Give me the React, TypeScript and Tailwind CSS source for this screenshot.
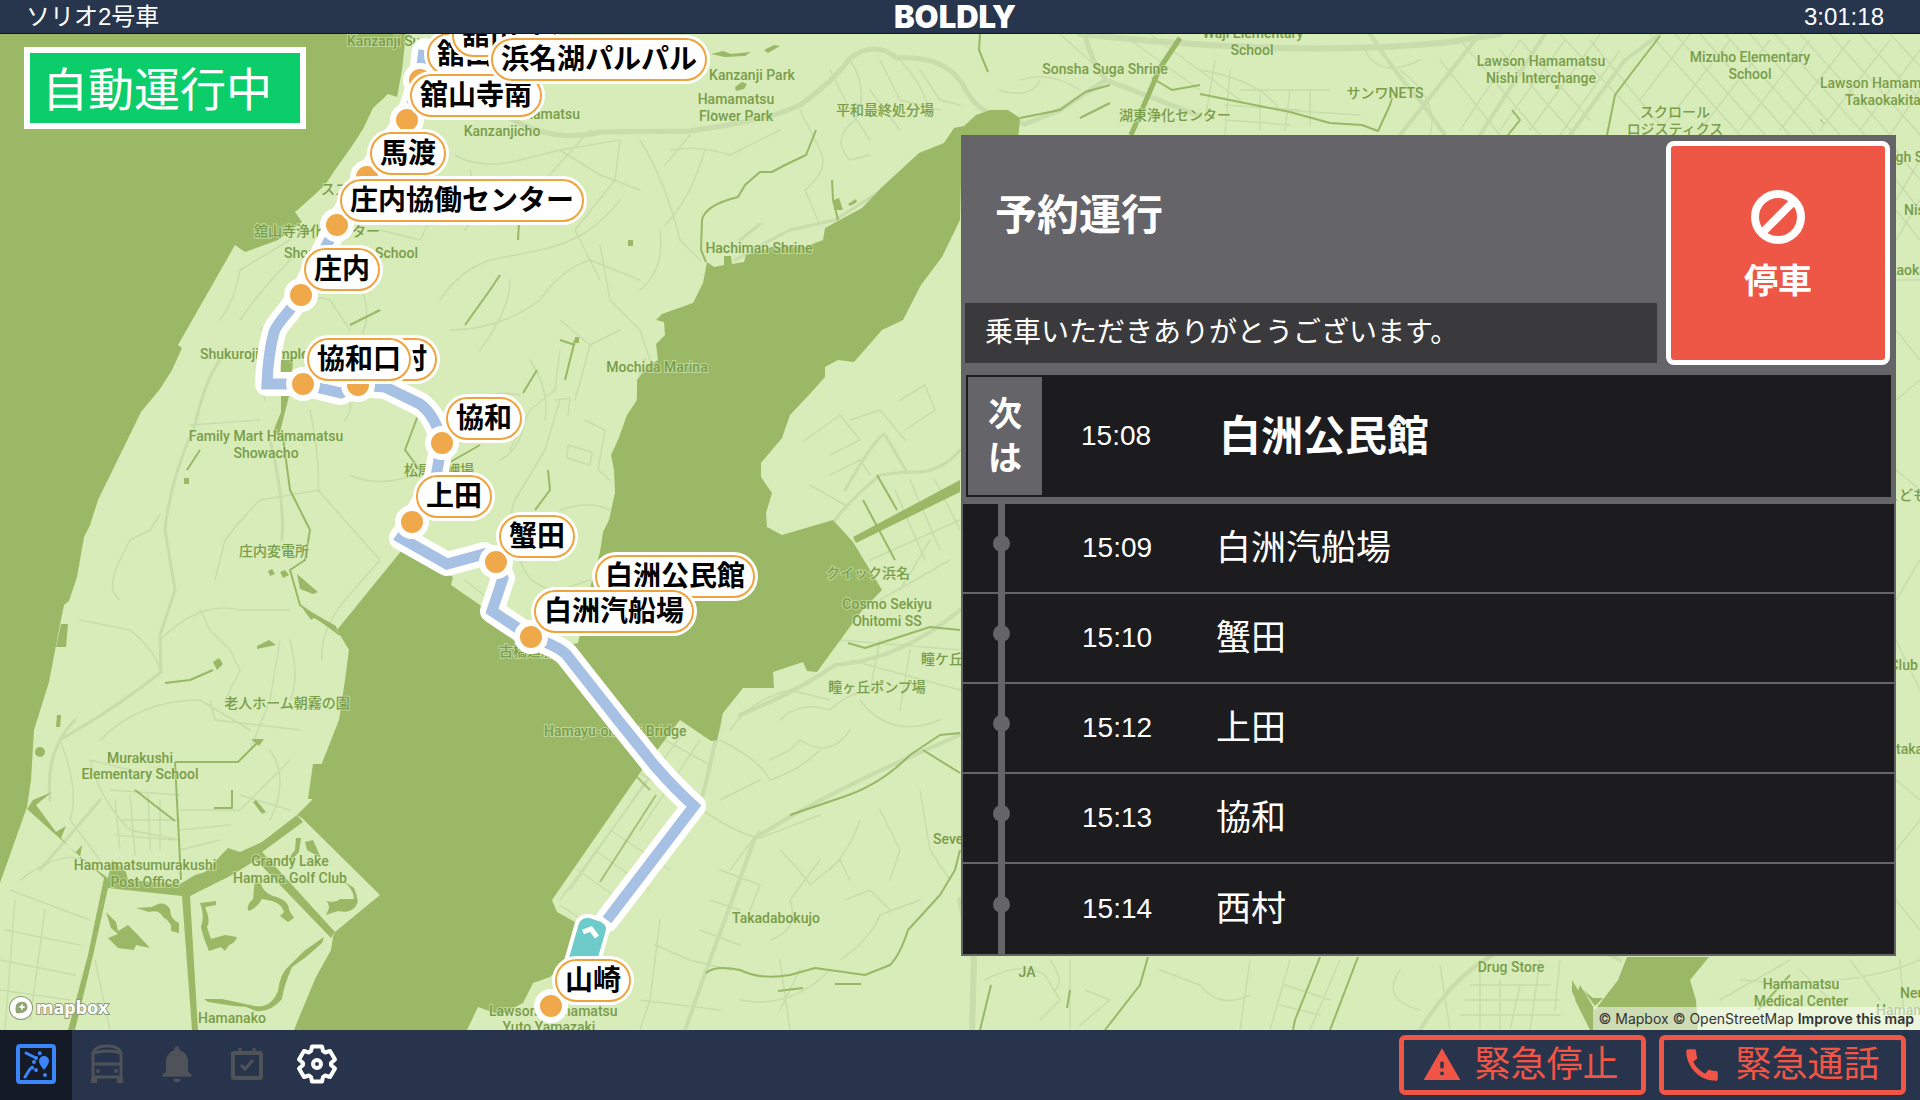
import { useState } from 'react';
import { MdCall, MdNotifications, MdWarning } from 'react-icons/md';

type Pin = { name: string; left: string };

const nextStop = { time: '15:08', name: '白洲公民館' };

const stops = [
  { time: '15:09', name: '白洲汽船場' },
  { time: '15:10', name: '蟹田' },
  { time: '15:12', name: '上田' },
  { time: '15:13', name: '協和' },
  { time: '15:14', name: '西村' },
];

// Later pins are drawn over earlier ones
const pins: Pin[] = [
  { name: '舘山寺', left: 'left-[427px] top-[-1px]' },
  { name: '舘山寺', left: 'left-[452px] top-[-20px]' },
  { name: '舘山寺南', left: 'left-[410px] top-[40px]' },
  { name: '浜名湖パルパル', left: 'left-[491px] top-[4px]' },
  { name: '馬渡', left: 'left-[370px] top-[98px]' },
  { name: '庄内協働センター', left: 'left-[340px] top-[145px]' },
  { name: '庄内', left: 'left-[304px] top-[214px]' },
  { name: '西村', left: 'left-[361px] top-[304px]' },
  { name: '協和口', left: 'left-[307px] top-[304px]' },
  { name: '協和', left: 'left-[446px] top-[363px]' },
  { name: '上田', left: 'left-[416px] top-[441px]' },
  { name: '蟹田', left: 'left-[499px] top-[481px]' },
  { name: '白洲公民館', left: 'left-[595px] top-[521px]' },
  { name: '白洲汽船場', left: 'left-[534px] top-[556px]' },
  { name: '山崎', left: 'left-[555px] top-[925px]' },
];

const dots = [
  [420, 80], [407, 120], [367, 177], [337, 225], [301, 295], [303, 384], [358, 385],
  [442, 443], [412, 522], [496, 562], [531, 637], [551, 1006],
];

type Place = [text: string, x: number, y: number, anchor?: 'start' | 'middle' | 'end'];

const places: Place[] = [
  ['Kanzanji Sun', 347, 46, 'start'],
  ['Hamamatsu', 580, 119, 'end'],
  ['Kanzanjicho', 502, 136],
  ['Kanzanji Park', 752, 80],
  ['Hamamatsu', 736, 104],
  ['Flower Park', 736, 121],
  ['平和最終処分場', 885, 115],
  ['Hachiman Shrine', 759, 253],
  ['Sonsha Suga Shrine', 1105, 74],
  ['湖東浄化センター', 1119, 120, 'start'],
  ['Waji Elementary', 1253, 38],
  ['School', 1252, 55],
  ['サンワNETS', 1385, 98],
  ['Lawson Hamamatsu', 1541, 66],
  ['Nishi Interchange', 1541, 83],
  ['Mizuho Elementary', 1750, 62],
  ['School', 1750, 79],
  ['Lawson Hamamatsu', 1820, 88, 'start'],
  ['Takaokakita', 1845, 105, 'start'],
  ['スクロール', 1675, 117],
  ['ロジスティクス', 1675, 134],
  ['High School', 1882, 162, 'start'],
  ['Nishi', 1904, 215, 'start'],
  ['Takaoka', 1874, 275, 'start'],
  ['こども', 1885, 500, 'start'],
  ['Golf Club', 1860, 670, 'start'],
  ['Yutaka', 1880, 754, 'start'],
  ['Mochida Marina', 657, 372],
  ['スズキ', 321, 194, 'start'],
  ['舘山寺浄化センター', 254, 236, 'start'],
  ['Shonai', 284, 258, 'start'],
  ['School', 418, 258, 'end'],
  ['Shukuroji Temple', 200, 359, 'start'],
  ['Family Mart Hamamatsu', 266, 441],
  ['Showacho', 266, 458],
  ['松尾鼻岬場', 404, 475, 'start'],
  ['庄内変電所', 274, 556],
  ['老人ホーム朝霧の園', 287, 708],
  ['古橋造船場', 499, 656, 'start'],
  ['Hamayu-ohashi Bridge', 544, 736, 'start'],
  ['クイック浜名', 868, 578],
  ['Cosmo Sekiyu', 887, 609],
  ['Ohitomi SS', 887, 626],
  ['瞳ケ丘', 921, 664, 'start'],
  ['瞳ヶ丘ポンプ場', 877, 692],
  ['Takadabokujo', 776, 923],
  ['Seven', 933, 844, 'start'],
  ['JA', 1027, 977],
  ['Drug Store', 1511, 972],
  ['Hamamatsu', 1801, 989],
  ['Medical Center', 1801, 1006],
  ['Neu', 1900, 998, 'start'],
  ['Hamamatsu', 1876, 1015, 'start'],
  ['Murakushi', 140, 763],
  ['Elementary School', 140, 779],
  ['Hamamatsumurakushi', 145, 870],
  ['Post Office', 145, 887],
  ['Grandy Lake', 290, 866],
  ['Hamana Golf Club', 290, 883],
  ['Hamanako', 232, 1023],
  ['Lawson Hamamatsu', 489, 1016, 'start'],
  ['Yuto Yamazaki', 549, 1032],
];

const route =
  'M424 50 L420 80 L407 120 L367 175 L337 225 L318 262 L301 295 L288 312 Q276 326 274 332 Q268 355 267 384 L303 384 L341 393 L358 385 L385 387 L420 404 Q436 416 442 443 L435 482 L412 522 L401 538 L447 564 L484 554 L496 562 L503 578 L492 611 L531 637 Q556 645 566 654 L618 720 L654 765 Q676 790 694 806 L607 920';

export default function App() {
  return (
    <div className="flex h-screen flex-col overflow-hidden bg-[#27344b] font-['Liberation_Sans','Noto_Sans_CJK_JP',sans-serif] text-white">
      <Header />
      <main className="relative flex-1 overflow-hidden bg-[#d7ecb8]">
        <RouteMap />
        <div className="absolute top-[13px] left-6 border-6 border-white bg-[#0bce6b] pt-[6px] pr-7 pb-[2px] pl-3 text-[46px] leading-[62px]">
          自動運行中
        </div>
        <ReservationPanel />
        <MapboxMark />
        <div className="absolute right-0 bottom-0 flex gap-1 bg-white/50 px-[6px] font-[Inter,sans-serif] text-[14px] leading-[23px] text-[#333]">
          <a href="#mapbox">© Mapbox</a>
          <a href="#osm">© OpenStreetMap</a>
          <a href="#improve" className="font-semibold">Improve this map</a>
        </div>
      </main>
      <Footer />
    </div>
  );
}

function Header() {
  return (
    <header className="grid h-[34px] shrink-0 grid-cols-3 items-center border-b border-[#0f1729] bg-[#27354d] pr-9 pl-[26px] text-2xl">
      <span>ソリオ2号車</span>
      <h1 className="text-center font-[Inter,sans-serif] text-[31px] leading-8 font-black">BOLDLY</h1>
      <time className="text-right">3:01:18</time>
    </header>
  );
}

function ReservationPanel() {
  return (
    <section className="absolute top-[101px] right-6 w-[935px] max-w-full border-2 border-[#656469] bg-[#656469]">
      <div className="flex gap-[9px] pt-1 pr-1 pb-[10px] pl-[2px]">
        <div className="flex flex-1 flex-col pb-[2px]">
          <h2 className="flex flex-1 items-center pb-3 pl-[30px] text-[42px] leading-none font-bold">予約運行</h2>
          <p className="bg-[#3a3a3c] pl-5 text-[28px] leading-[60px]">乗車いただきありがとうございます。</p>
        </div>
        <button
          type="button"
          className="flex h-[224px] w-[224px] flex-col items-center justify-center gap-4 rounded-lg border-5 border-white bg-[#ee5745] pb-4 text-[34px] leading-10 font-bold"
        >
          <StopIcon />
          停車
        </button>
      </div>

      <div className="mx-[3px] mb-[7px] flex h-[122px] items-center bg-[#1c1c1e]">
        <div className="ml-[2px] flex h-[118px] w-[74px] items-center justify-center bg-[#656469] text-center text-[34px] leading-[44px] font-bold">
          次<br />は
        </div>
        <time className="ml-[39px] w-[138px] text-[28px]">{nextStop.time}</time>
        <strong className="text-[42px]">{nextStop.name}</strong>
      </div>

      <ol className="bg-[#1c1c1e]">
        {stops.map((stop) => (
          <li
            key={stop.time}
            className="flex h-[90px] items-center border-b-2 border-[#656469] last:border-b-0"
          >
            <div className="relative ml-[30px] flex h-[90px] w-[17px] justify-center">
              <div className="h-full w-[7px] bg-[#656469]" />
              <div className="absolute top-8 h-[17px] w-[17px] rounded-full bg-[#656469]" />
            </div>
            <time className="ml-[72px] w-[134px] text-[28px]">{stop.time}</time>
            <span className="text-[35px] leading-[44px]">{stop.name}</span>
          </li>
        ))}
      </ol>
    </section>
  );
}

function Footer() {
  const [tab, setTab] = useState('map');
  const tabs = [
    { id: 'map', label: '地図', icon: <MapIcon /> },
    { id: 'bus', label: '車両', icon: <BusIcon /> },
    { id: 'bell', label: '通知', icon: <BellIcon /> },
    { id: 'calendar', label: '予定', icon: <CalendarIcon /> },
    { id: 'settings', label: '設定', icon: <GearIcon /> },
  ];

  return (
    <footer className="flex h-[70px] shrink-0 items-center justify-between bg-[#27344b] pr-[14px]">
      <nav className="flex h-full">
        {tabs.map((item) => (
          <button
            key={item.id}
            type="button"
            aria-label={item.label}
            onClick={() => setTab(item.id)}
            className={
              tab === item.id
                ? 'flex w-[72px] items-center justify-center bg-[#141a26] pb-[2px] text-[#3b86fb]'
                : 'flex w-[70px] items-center justify-center pb-[2px] text-[#4f5258] last:text-white'
            }
          >
            {item.icon}
          </button>
        ))}
      </nav>
      <div className="flex gap-[13px]">
        <button
          type="button"
          className="flex h-[60px] w-[247px] items-center justify-center gap-3 rounded-md border-5 border-[#f05545] pr-1 text-[36px] text-[#f05545]"
        >
          <MdWarning size={40} />
          緊急停止
        </button>
        <button
          type="button"
          className="flex h-[60px] w-[247px] items-center justify-center gap-3 rounded-md border-5 border-[#f05545] pr-1 text-[36px] text-[#f05545]"
        >
          <MdCall size={42} />
          緊急通話
        </button>
      </div>
    </footer>
  );
}

function RouteMap() {
  return (
    <div className="absolute inset-0">
      <svg width="1920" height="996" viewBox="0 34 1920 996" className="absolute top-0 left-0 max-w-none">
        <rect y="34" width="1920" height="996" fill="#d7ecb8" />
        <g fill="none" stroke="#c8dcac" strokeLinejoin="round" strokeLinecap="round">
          <MinorRoads />
          <MajorRoads />
        </g>
        <g fill="none" stroke="#98b866" strokeWidth="2" strokeLinejoin="round">
          <Streams />
        </g>
        <g fill="#9bb866">
          <Water />
        </g>
        <g
          fill="#7a9d4a"
          stroke="#d7ecb8"
          strokeWidth="2"
          strokeOpacity="0.6"
          paintOrder="stroke"
          fontSize="14"
          fontWeight="500"
          fontFamily="Roboto, 'Noto Sans CJK JP', sans-serif"
        >
          {places.map(([text, x, y, anchor]) => (
            <text key={`${text}-${x}-${y}`} x={x} y={y} textAnchor={anchor ?? 'middle'}>
              {text}
            </text>
          ))}
        </g>
        <g fill="none" strokeLinejoin="round" strokeLinecap="round">
          <path d={route} stroke="#fff" strokeWidth="24" />
          <path d={route} stroke="#a6c1e3" strokeWidth="11" strokeLinejoin="miter" strokeLinecap="butt" />
        </g>
        {dots.map(([x, y]) => (
          <circle key={`${x}-${y}`} cx={x} cy={y} r="14" fill="#f0a94a" stroke="#fff" strokeWidth="6" />
        ))}
        {/* vehicle */}
        <path
          d="M564 968 L577 923 Q580 915 590 916 L599 919 Q609 923 608 930 L597 968 Z"
          fill="#6dcbc9"
          stroke="#fff"
          strokeWidth="4"
        />
        <path d="M583 932 L591 929 L597 937" fill="none" stroke="#fff" strokeWidth="5" />
      </svg>
      {pins.map((pin) => (
        <div key={pin.left} className={`absolute ${pin.left} rounded-full bg-white ring-3 ring-white`}>
          <div className="rounded-full border-2 border-[#f0a33c] px-2 text-[28px] leading-[39px] font-bold whitespace-nowrap text-black">
            {pin.name}
          </div>
        </div>
      ))}
    </div>
  );
}

function Water() {
  return (
    <>
      {/* west lake */}
      <path d="M0 34 H406 L402 70 L397 97 L388 94 L373 108 L363 129 L352 146 L335 170 L325 185 L312 197 L295 212 L302 222 L278 240 L245 252 L235 245 L178 345 L182 348 L172 370 L160 389 L141 412 L120 455 L98 500 L90 525 L84 537 L77 577 L69 601 L64 605 L57 640 L49 682 L34 730 L31 780 L27 807 L0 883 Z" />
      {/* inner bay */}
      <path d="M294 1030 L305 1003 L316 977 L331 950 L333 937 L335 932 L380 895 L302 818 L297 815 L312 800 L322 763 L339 720 L345 680 L349 650 L337 630 L402 550 L453 577 L451 585 L506 623 L540 650 L578 643 L592 580 L600 552 L603 532 L609 520 L615 493 L614 470 L611 455 L618 440 L627 415 L637 400 L637 380 L647 367 L658 360 L656 344 L665 335 L664 322 L656 320 L662 314 L693 303 L703 283 L707 262 L714 267 L724 265 L724 256 L731 256 L732 264 L744 262 L746 255 L772 247 L805 247 L823 240 L825 228 L862 208 L882 187 L919 153 L944 143 L954 128 L964 126 L976 115 L990 110 L1008 110 L1020 118 L1018 140 L962 140 L960 220 L942 257 L921 285 L903 320 L882 330 L854 362 L838 360 L825 367 L825 377 L808 396 L790 415 L782 438 L761 463 L761 477 L772 493 L766 513 L767 527 L782 535 L833 520 L853 542 L882 590 L860 613 L817 672 L807 671 L803 662 L773 672 L774 688 L743 688 L723 713 L717 740 L711 741 L680 720 L642 770 L552 900 L557 912 L575 922 L568 960 L550 977 L533 983 L523 1003 L500 1015 L478 1007 L467 1030 Z" />
      <path d="M1627 957 L1618 980 L1595 1010 L1580 985 L1575 1000 L1590 1030 H1698 L1696 1000 L1690 980 L1709 957 Z" />
      {/* canals around the golf course */}
      <path d="M297 815 L303 822 L262 852 L335 932 L331 938 L256 860 L232 875 L190 896 L198 1030 H192 L182 896 L108 888 L92 960 L75 1030 H68 L88 955 L104 878 L27 809 L33 800 L52 792 L36 805 L56 832 L66 826 L61 838 L75 853 L82 845 L80 858 L108 878 L112 860 L126 872 L128 880 L180 884 L195 875 L205 872 L228 848 L240 852 L262 842 Z" />
      <path d="M106 912 l10 10 l2 9 l10 -6 l8 8 l14 15 l-14 -3 l-2 5 l-16 -2 l-10 -10 l10 -4 l-7 -6 Z" />
      <path d="M136 908 l16 -1 q12 -8 18 2 q0 10 9 14 l0 10 l-8 -2 q2 -8 -8 -14 q-4 -8 -14 -5 Z" />
      <path d="M200 903 l16 -2 l0 4 l-11 2 q6 14 2 20 l4 12 l14 -4 l12 2 q-2 6 -8 8 l-4 6 l-4 -4 l-12 4 q-6 -14 -8 -24 q4 -12 -1 -24 Z" />
      <path d="M255 878 l6 6 q2 8 12 12 q16 4 16 14 l5 8 l-6 4 l-8 -6 l4 -4 q-2 -8 -12 -11 l-10 -2 q-4 8 -13 12 q-4 -4 4 -12 Z" />
      <path d="M342 880 l12 8 q6 14 2 18 q-6 8 -18 5 l-12 4 q6 -10 0 -14 q10 2 14 -2 l14 0 q0 -10 -12 -19 Z" />
      <path d="M296 838 l5 0 l-2 14 l-9 10 q-2 -4 5 -12 Z M305 842 l8 -2 l8 18 l-14 -8 Z" />
      <path d="M204 999 l18 0 l28 6 q20 6 28 -14 q2 -18 12 -26 l14 -14 l20 -14 l-2 6 l-16 14 l-14 10 q-8 18 -10 32 q-12 14 -26 12 l-10 -4 l-12 -1 l-26 -4 Z" />
      {/* ponds and reservoirs */}
      <path d="M281 360 h12 l-2 28 l-12 48 l-6 -4 l8 -20 Z" />
      <path d="M297 574 l21 18 l-5 2 l-13 -5 Z M280 572 l5 -2 l4 5 l-6 3 Z M268 571 l4 -2 l3 5 l-5 2 Z" />
      <path d="M301 606 l35 20 l2 6 l-24 -14 l-3 2 Z M257 646 l12 -6 l7 5 l-19 4 Z M213 662 l6 -4 l4 6 l-6 6 Z" />
      <path d="M61 624 h7 l-2 23 h-10 Z M57 715 h4 l-1 12 h-4 Z M313 764 h10 l-9 35 h-6 Z M251 739 h13 l-5 7 Z" />
      <circle cx="40" cy="752" r="5" />
      <path d="M853 537 L960 480 V492 L856 543 Z M834 200 l5 -2 l4 12 h-9 Z M848 204 l8 -5 l1 3 l-7 4 Z" />
      <path d="M711 112 h3 l4 6 Z M735 87 l7 -5 l5 2 l-3 5 l-8 2 Z M711 54 l12 -3 l8 3 l20 -2 l-6 4 l-20 1 Z M764 50 l10 -5 l6 1 l-12 7 Z" />
      <path d="M628 240 h5 v6 h-5 Z M1820 120 l5 5 l-4 -6 Z M1555 85 h4 v4 h-4 Z M575 337 h4 v6 h-4 Z M184 478 h5 v6 h-5 Z M253 802 l3 -2 l10 12 l-4 2 Z" />
      <path d="M1572 980 l6 10 l4 12 l-6 -2 l-4 -8 Z M1583 990 l10 8 l10 0 l-8 8 Z" />
    </>
  );
}

function MajorRoads() {
  return (
    <>
      <path
        strokeWidth="5"
        d="M500 112 Q550 145 600 132 L690 131 Q770 120 800 105 Q835 80 850 58 Q875 40 897 58 Q945 55 963 85 Q975 110 1000 118 L1025 124 L1060 110 L1106 80 L1200 116 M1106 80 Q1090 60 1085 34"
      />
      <path strokeWidth="6" d="M1080 34 Q1300 58 1450 42 L1500 34 M960 900 L974 960 L972 1030" />
      <path
        strokeWidth="3"
        d="M220 360 Q205 380 195 425 Q170 480 165 530 L175 590 Q165 620 160 635 L161 672 Q120 705 60 740 M270 440 Q285 500 282 540 M645 360 Q638 370 634 450 L628 500 Q620 530 605 555"
      />
      <path
        strokeWidth="4"
        d="M720 722 L703 795 M740 715 Q800 690 835 665 Q900 660 960 610 M685 1030 L710 960 L755 838 Q830 790 960 735 M1420 1030 Q1500 900 1620 960 M1370 34 Q1400 80 1420 100 L1445 135 M1480 34 L1400 135 M1545 34 L1480 135 M1660 34 L1625 60 L1570 135"
      />
      <path strokeWidth="3" d="M735 260 Q770 240 790 230 L835 220 Q900 180 960 135 M760 224 L740 240 M50 800 Q45 750 75 720 M40 870 L100 800" />
      <path strokeWidth="3" d="M835 520 Q850 500 880 475 L905 472 Q940 475 960 450 M845 490 Q880 430 885 435 L907 472" />
    </>
  );
}

function MinorRoads() {
  return (
    <g strokeWidth="1.5">
      {/* north */}
      <path d="M455 155 Q480 170 520 160 L560 150 L620 140 M560 150 L600 175 L640 190 M470 200 Q520 200 545 180 L590 130 M620 140 L615 180 L575 230 L600 280 M640 140 Q665 180 680 240 M670 150 Q700 145 730 155 L780 130 M690 135 L665 165 M705 150 Q690 200 665 225 M800 110 L820 150 Q830 170 805 190 L820 225 M830 70 L850 110 L870 140 M850 60 Q870 90 855 120 Q830 140 850 160 L870 155 M880 60 L900 100 L940 110 M900 60 Q920 80 930 110 M920 70 L940 100 L960 105 M870 90 L900 130" />
      <path d="M440 300 Q460 270 490 260 L540 250 Q590 240 620 200 M450 330 Q500 330 540 300 Q560 270 590 260 L640 280 M480 350 Q510 310 510 280 M600 245 L610 300 L640 330 L650 360 M660 230 Q665 270 640 290 M680 240 L700 260 M560 320 L590 345 L575 400 M590 345 L620 330 M530 360 Q550 390 545 420 M470 170 L480 210 L465 230 M380 230 L420 240 L440 200 M260 330 Q300 290 330 300 L350 330 M340 260 Q380 300 360 340 M300 250 Q260 290 240 320 M220 320 Q235 300 240 270 L290 240" />
      {/* west peninsula */}
      <path d="M190 425 L260 420 M265 400 Q255 370 275 340 M310 410 Q320 460 318 490 L380 560 M320 490 L260 500 Q240 520 225 540 L215 580 M345 420 Q360 400 335 390 M430 470 Q380 490 350 475 M380 560 L345 600 Q320 630 322 660 M130 540 L150 530 L160 515 M130 540 L120 560 Q105 590 120 600 M80 620 L130 630 Q155 650 160 670 M160 640 Q200 600 240 610 L290 610 M200 610 L210 630 L230 650 L240 670 L225 700 M280 640 L270 700 L250 750 M100 740 Q140 700 200 700 L250 730 M210 700 L215 720 L300 730 M290 640 Q300 680 290 700" />
      <path d="M60 740 Q80 790 70 820 L100 860 M90 760 L130 770 M90 760 Q100 800 130 830 L180 840 M110 790 L180 795 M115 800 L120 850 M130 795 L135 855 M148 795 L150 850 M160 800 V850 M120 820 H180 M115 835 L175 840 M180 810 H240 L290 760 M180 830 L230 825 M180 850 L220 840 M240 795 L290 810 M10 890 L90 920 M5 930 L80 945 M0 960 L75 975 M0 990 L70 1000 M15 900 L5 1030 M45 910 L30 1020 M95 960 L110 1030 M20 880 Q60 850 85 860 M420 790 Q440 760 410 735 M270 750 Q290 780 270 820" />
      {/* mid shore */}
      <path d="M560 350 L555 390 L530 410 L510 450 M470 400 Q500 390 520 395 M560 400 L545 450 L515 500 Q505 520 525 540 M568 445 L592 452 L590 465 L567 458 Z M585 420 L605 430 L598 470 L610 480 M560 510 Q590 500 610 510 M520 560 Q530 590 560 590 L590 580 M465 580 L490 600 M555 400 L570 398 L568 415 M525 420 Q520 450 500 460" />
      {/* south-east shore */}
      <path d="M640 773 L700 810 M665 740 L710 765 M610 830 L670 870 M595 850 L650 890 M578 870 L620 900 M685 730 L560 900 M700 740 L640 830 M650 775 L570 890 M560 905 L590 925 M720 740 Q760 760 770 780 Q800 770 820 750 M730 730 Q750 700 790 690 L830 700 M760 780 L720 800 M770 760 L790 750 L800 740 Q830 760 850 730 M705 812 Q740 835 760 838 L820 815 M730 870 L760 830 M720 870 L760 885 L750 910 M710 900 L740 910 M700 930 L740 945 M690 960 L730 970 M655 945 L690 960 M640 1000 L720 1010 M660 920 L650 1000 L640 1030 M770 940 Q800 930 790 900 L820 860 M780 850 Q800 870 810 885 L840 860 L850 880 M860 820 Q850 850 830 870 M880 810 L900 850 L890 880 M920 790 L930 850 L950 880 M845 900 L870 890 L890 910 M840 960 Q870 940 880 915 L920 900 M780 960 L790 1030 M800 970 L780 1010 M740 1000 Q790 1010 830 970" />
      <path d="M850 420 L880 410 L905 440 M805 440 L840 415 L860 440 L830 455 M830 475 L860 460 L870 475 M810 485 L845 505 M900 400 L925 385 L935 410 L905 430 M870 560 L960 520 M880 600 L950 560 M900 590 L930 540 M895 490 L925 560 M910 480 L940 550 M935 480 L960 530 M840 640 L960 650 M850 660 L960 690 M880 640 L870 690 M910 650 L900 710 M860 700 Q890 740 940 720 M780 720 Q800 700 830 710 Q850 690 880 690" />
      {/* below the panel */}
      <path d="M985 980 Q1020 960 1045 975 L1060 1000 L1040 1020 M1050 960 Q1065 980 1055 990 M1070 960 V1030 M1085 990 L1110 1000 L1080 1025 M1160 970 L1200 985 Q1220 1010 1250 995 M1250 960 L1240 1030 M1290 960 L1270 1030 M1340 960 L1310 1030 M1285 985 L1330 1000 M1280 1005 L1320 1015 M1400 970 Q1380 1000 1420 1010 M1440 965 L1450 1030 M1470 985 H1550 M1465 1000 H1560 M1460 1015 H1560 M1480 970 V1030 M1500 980 V1030 M1520 985 L1510 1030 M1540 960 L1530 1030 M1560 960 L1555 1010 M1720 1000 L1790 960 M1740 980 Q1850 990 1920 960 M1800 970 L1840 1010 M1850 960 L1880 1000 M1900 960 L1905 1030" />
      {/* north-east town grid */}
      <path d="M1060 34 L1100 70 M1130 40 L1200 90 M1150 34 L1240 100 M1020 80 Q1050 70 1080 90 M1000 90 Q1030 100 1040 80 M1200 70 Q1260 80 1280 110 L1360 115 M1215 60 L1205 120 M1230 70 L1225 135 M1240 90 L1330 90 M1225 105 L1300 110 M1225 120 L1290 125 M1260 95 V130 M1290 90 L1285 130 M1310 90 V125 M1365 50 Q1380 80 1420 60 M1400 70 Q1440 100 1430 135" />
      <path d="M1440 60 L1500 135 M1460 40 L1540 135 M1500 50 L1570 130 M1520 40 L1590 120 M1560 34 L1640 120 M1590 40 L1660 125 M1460 130 L1520 40 M1500 130 L1565 40 M1530 130 L1600 34 M1560 135 L1620 50 M1650 34 L1740 135 M1675 34 L1765 135 M1700 34 L1790 135 M1725 34 L1815 135 M1750 34 L1840 135 M1775 34 L1865 135 M1800 34 L1890 135 M1830 34 L1920 135 M1860 34 L1920 100 M1890 34 L1920 66 M1640 100 L1690 34 M1660 130 L1730 40 M1700 130 L1770 40 M1740 130 L1810 40 M1780 130 L1850 40 M1820 130 L1890 40 M1860 130 L1920 50 M1890 135 L1920 90" />
      <path d="M1896 150 L1920 180 M1896 180 L1920 210 M1896 210 L1920 240 M1896 200 L1920 160 M1896 240 L1920 200 M1896 280 H1920 M1896 330 L1920 360 M1896 400 L1920 380 M1896 470 L1920 490 M1896 600 L1920 560 M1896 640 L1920 690 M1896 780 L1920 800 M1896 850 L1920 820 M1896 900 L1920 930" />
    </g>
  );
}

function Streams() {
  return (
    <>
      <path d="M816 130 L806 155 L785 165 L772 172 L760 172 L745 185 L738 197 Q705 205 702 220 L701 250 L706 262 M832 180 L833 200 L838 220 M980 34 L979 50 L988 72 M1020 118 L1060 110 L1085 92 L1110 85 M1080 118 L1110 103 M1152 78 L1172 90 L1200 85" />
      <path d="M1180 38 L1160 68 L1131 135" strokeWidth="5" />
      <path d="M1200 94 L1290 112 L1330 123 L1362 125 L1378 131 L1390 105 L1392 98 M1660 36 L1630 75 L1615 95 L1607 135 M1512 110 L1520 120 L1508 135" />
      <path d="M282 430 L290 490 L310 530 L305 560 L290 570 L300 605 L340 635 M200 450 L187 470 M420 410 L405 450 L420 470 L445 465 L480 445 M548 470 L550 490 L535 510 M537 370 L523 393 M350 325 L380 310 M465 325 L490 290 L500 275 M518 240 L520 205 M575 340 L565 380 M575 345 L560 340 M165 683 L190 680 L213 670 M175 762 H238 L258 742 M175 762 L181 880 M175 821 L135 790 M232 790 V808 H214" />
      <path d="M656 795 L600 882 M600 740 L650 790" strokeOpacity="0.8" />
      <path d="M706 973 Q715 965 740 970 Q760 980 790 975 L815 968 L865 975 L890 965 Q900 955 908 930 L940 895 L955 870 L960 850 M790 815 L843 797 Q880 785 910 755 L940 735 L960 733 M923 750 L960 773 M778 991 L803 988 M835 984 H861" />
      <path d="M877 475 L897 510 M863 500 L895 560 M848 643 L865 648 L930 627 L960 630 M1148 957 L1140 985 L1105 1030 M1320 957 L1295 1020 L1293 1030 M1358 957 L1330 1030 M991 985 L980 1030 M1070 990 L1067 1008 M1758 1010 L1790 975" />
    </>
  );
}

function MapboxMark() {
  return (
    <svg width="110" height="36" viewBox="0 0 110 36" className="absolute bottom-1 left-2">
      <g stroke="#8c9b78" strokeWidth="2" paintOrder="stroke">
        <circle cx="13" cy="18" r="11" fill="#fff" />
        <path d="M18 13 A7 7 0 0 0 8 15 Q7 18 8 23 Q14 24 18 21 Q21 17 18 13 Z" fill="#8fa374" stroke="none" />
        <path d="M14 13 l1 3 l3 1 l-3 1 l-1 3 l-1 -3 l-3 -1 l3 -1 Z" fill="#fff" stroke="none" />
        <text x="28" y="24" fill="#fff" fontSize="18" fontWeight="700" fontFamily="'Noto Sans', sans-serif">
          mapbox
        </text>
      </g>
    </svg>
  );
}

function StopIcon() {
  return (
    <svg width="56" height="56" viewBox="0 0 56 56" fill="none" stroke="currentColor">
      <circle cx="28" cy="28" r="23" strokeWidth="8" />
      <path d="M12 44 L44 12" strokeWidth="8" />
    </svg>
  );
}

function MapIcon() {
  return (
    <svg width="40" height="40" viewBox="0 0 40 40" fill="none" stroke="currentColor" strokeLinecap="round">
      <rect x="2" y="2" width="36" height="36" rx="2" strokeWidth="4" />
      <path d="M10 9 L20 14" strokeWidth="3" />
      <path d="M9 33 L14 25" strokeWidth="3" />
      <path d="M20 14 L24 9 M18 18 L16 24 M20 26 L24 28 M29 31 H30" strokeWidth="4" strokeDasharray="0 6" />
      <path d="M28 26 Q23 20 23 17 a5 5 0 0 1 10 0 Q33 20 28 26 Z" fill="currentColor" stroke="none" />
    </svg>
  );
}

function BusIcon() {
  return (
    <svg width="34" height="40" viewBox="0 0 34 40" fill="none" stroke="currentColor" strokeWidth="3">
      <path d="M3 38 V9 Q5 2 17 2 Q29 2 31 9 V38" />
      <path d="M3 9 Q17 5 31 9 M3 20 H31 M3 33 H31" strokeWidth="3" />
      <path d="M1 34 H7 V39 H1 Z M27 34 H33 V39 H27 Z" fill="currentColor" stroke="none" />
      <circle cx="8" cy="27" r="2" fill="currentColor" stroke="none" />
      <circle cx="26" cy="27" r="2" fill="currentColor" stroke="none" />
    </svg>
  );
}

function BellIcon() {
  return <MdNotifications size={44} />;
}

function CalendarIcon() {
  return (
    <svg width="36" height="36" viewBox="0 0 36 36" fill="none" stroke="currentColor" strokeWidth="4">
      <rect x="4" y="7" width="28" height="25" rx="1" />
      <path d="M11 2 V8 M25 2 V8" strokeWidth="3" />
      <path d="M12 19 L16 23 L24 14" strokeWidth="3" />
    </svg>
  );
}

function GearIcon() {
  return (
    <svg width="42" height="42" viewBox="-1 -1 42 42" fill="none" stroke="currentColor" strokeWidth="4" strokeLinejoin="round">
      <path d="M15 2.5 H25 L26 7 L28 8.5 L33 7 L38 15.5 L34 19 V21 L38 24.5 L33 33 L28 31.5 L26 33 L25 37.5 H15 L14 33 L12 31.5 L7 33 L2 24.5 L6 21 V19 L2 15.5 L7 7 L12 8.5 L14 7 Z" />
      <circle cx="20" cy="20" r="4" />
    </svg>
  );
}
